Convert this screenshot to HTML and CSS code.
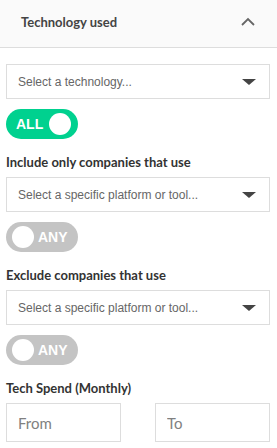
FILE: index.html
```html
<!DOCTYPE html>
<html lang="en">
<head>
    <meta charset="UTF-8">
    <meta name="viewport" content="width=device-width, initial-scale=1.0">
    <title>Technology used</title>
    <link rel="stylesheet" href="styles.css">
</head>
<body>
    <div class="painel">
        <div class="cabecalho">
            <h2>Technology used</h2>
            <svg class="seta" width="14" height="9" viewBox="0 0 14 9">
                <path d="M1 8 L7 2 L13 8" fill="none" stroke="#666" stroke-width="1.8"/>
            </svg>
        </div>

        <div class="conteudo">
            <div class="selecao primeira">
                <span>Select a technology...</span>
                <span class="caret"></span>
            </div>
            <div class="toggle ligado">
                <span class="rotulo">ALL</span>
                <span class="bola"></span>
            </div>

            <h3>Include only companies that use</h3>
            <div class="selecao">
                <span>Select a specific platform or tool...</span>
                <span class="caret"></span>
            </div>
            <div class="toggle">
                <span class="bola"></span>
                <span class="rotulo">ANY</span>
            </div>

            <h3>Exclude companies that use</h3>
            <div class="selecao">
                <span>Select a specific platform or tool...</span>
                <span class="caret"></span>
            </div>
            <div class="toggle">
                <span class="bola"></span>
                <span class="rotulo">ANY</span>
            </div>

            <h3>Tech Spend (Monthly)</h3>
            <div class="faixa">
                <input class="campo" type="text" placeholder="From">
                <input class="campo" type="text" placeholder="To">
            </div>
        </div>
    </div>
</body>
</html>
```

FILE: styles.css
```css
body {
    margin: 0;
    padding: 0;
    background: white;
    font-family: Lato, "Open Sans", sans-serif;
    color: #333;
}

.painel {
    width: 277px;
}

.cabecalho {
    height: 47px;
    border-bottom: 1px solid #ddd;
    background: #fafafa;
    display: flex;
    align-items: center;
    justify-content: space-between;
    padding: 0 22px 0 21px;
}

.cabecalho h2 {
    margin: 0;
    font-size: 13px;
    font-weight: 700;
    color: #444;
    margin-top: -3px;
}

.seta {
    margin-top: -5px;
}

.conteudo {
    padding: 0 7px 0 6px;
}

.selecao {
    height: 33px;
    border: 1px solid #ddd;
    display: flex;
    align-items: center;
    justify-content: space-between;
    padding: 0 13px 0 11px;
    font-family: "Liberation Sans", Arial, sans-serif;
    font-size: 12px;
    color: #666;
}

.primeira {
    margin-top: 16px;
}

.caret {
    width: 0;
    height: 0;
    border-left: 7px solid transparent;
    border-right: 7px solid transparent;
    border-top: 6px solid #444;
    margin-top: 1px;
}

.toggle {
    width: 72px;
    height: 30px;
    border-radius: 15px;
    background: #c4c4c4;
    margin-top: 10px;
    display: flex;
    align-items: center;
    padding: 0 6px;
    box-sizing: border-box;
    gap: 4px;
}

.toggle.ligado {
    background: #00d18f;
    padding: 0 6px 0 10px;
    gap: 6px;
}

.rotulo {
    font-family: "Liberation Sans", Arial, sans-serif;
    font-weight: 700;
    font-size: 14px;
    color: white;
}

.bola {
    width: 22px;
    height: 22px;
    border-radius: 50%;
    background: white;
}

h3 {
    margin: 15px 0 7px 0;
    font-size: 13px;
    font-weight: 700;
    color: #333;
    line-height: 16px;
}

.faixa {
    display: flex;
    justify-content: space-between;
}

.campo {
    width: 115px;
    height: 39px;
    box-sizing: border-box;
    border: 1px solid #ddd;
    padding: 0 11px;
    font-family: Lato, sans-serif;
    font-size: 15px;
    color: #333;
    outline: none;
}

.campo::placeholder {
    color: #808080;
}
```
